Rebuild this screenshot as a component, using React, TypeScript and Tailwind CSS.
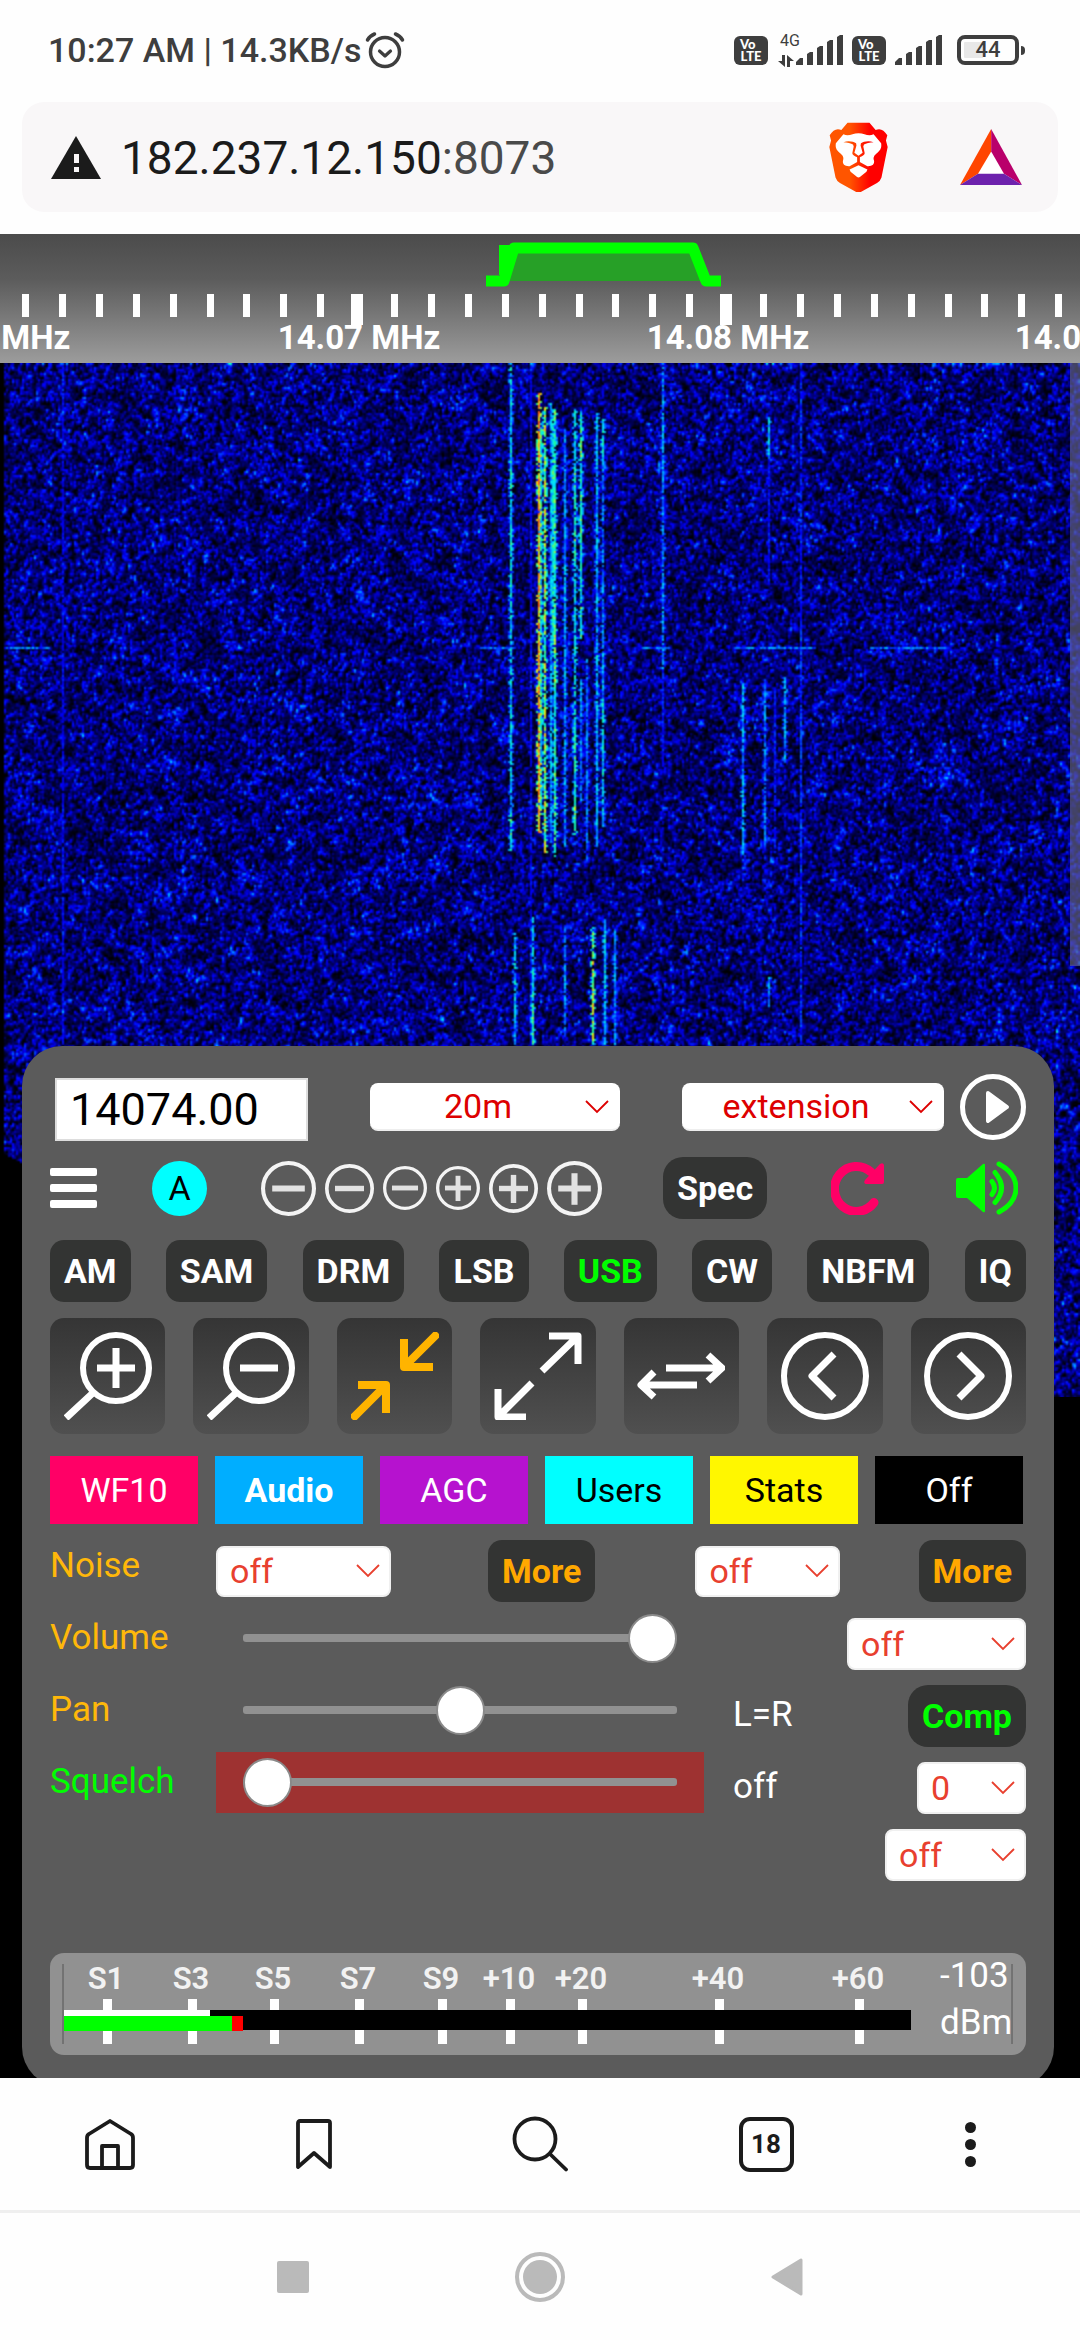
import { useLayoutEffect, useRef } from "react";
import type { ReactNode } from "react";

/* ---------- waterfall ---------- */

type Trace = { x: number; from: number; to: number; level: number };

const FIELD_WIDTH = 1080;
const FIELD_HEIGHT = 1034;
const CELL = 2;

const TRACES: Trace[] = [
  { x: 62, from: 0, to: 683, level: 0.34 },
  { x: 511, from: 0, to: 488, level: 0.58 },
  { x: 531, from: 0, to: 683, level: 0.34 },
  { x: 539, from: 31, to: 470, level: 0.95 },
  { x: 541, from: 60, to: 450, level: 0.6 },
  { x: 545, from: 45, to: 490, level: 0.78 },
  { x: 551, from: 40, to: 480, level: 0.52 },
  { x: 553, from: 50, to: 280, level: 0.62 },
  { x: 555, from: 47, to: 494, level: 0.68 },
  { x: 565, from: 67, to: 485, level: 0.5 },
  { x: 575, from: 47, to: 472, level: 0.62 },
  { x: 581, from: 49, to: 277, level: 0.62 },
  { x: 581, from: 316, to: 440, level: 0.48 },
  { x: 587, from: 297, to: 500, level: 0.46 },
  { x: 597, from: 50, to: 485, level: 0.52 },
  { x: 603, from: 57, to: 97, level: 0.6 },
  { x: 603, from: 97, to: 337, level: 0.48 },
  { x: 603, from: 337, to: 465, level: 0.6 },
  { x: 663, from: 0, to: 307, level: 0.48 },
  { x: 663, from: 307, to: 405, level: 0.36 },
  { x: 769, from: 55, to: 97, level: 0.54 },
  { x: 769, from: 97, to: 220, level: 0.36 },
  { x: 800, from: 0, to: 683, level: 0.38 },
  { x: 742, from: 318, to: 494, level: 0.54 },
  { x: 765, from: 316, to: 487, level: 0.46 },
  { x: 775, from: 327, to: 490, level: 0.36 },
  { x: 785, from: 314, to: 400, level: 0.52 },
  { x: 515, from: 570, to: 683, level: 0.56 },
  { x: 532, from: 555, to: 683, level: 0.62 },
  { x: 565, from: 567, to: 675, level: 0.48 },
  { x: 593, from: 564, to: 683, level: 0.76 },
  { x: 605, from: 556, to: 683, level: 0.54 },
  { x: 614, from: 567, to: 683, level: 0.48 },
  { x: 769, from: 615, to: 645, level: 0.5 },
];

const BURST_Y = 285;
const BURSTS: [number, number][] = [
  [4, 50],
  [480, 515],
  [640, 670],
  [735, 815],
  [870, 945],
];

const STOPS: [number, number, number, number][] = [
  [0, 0, 0, 0],
  [0.34, 0, 0, 255],
  [0.45, 0, 120, 255],
  [0.56, 0, 225, 255],
  [0.68, 30, 255, 150],
  [0.8, 225, 240, 20],
  [0.92, 255, 170, 20],
  [1, 255, 90, 20],
];

function colour(level: number): [number, number, number] {
  const v = Math.min(1, Math.max(0, level));
  for (let i = 1; i < STOPS.length; i++) {
    const hi = STOPS[i];
    if (v <= hi[0]) {
      const lo = STOPS[i - 1];
      const t = (v - lo[0]) / (hi[0] - lo[0]);
      return [lo[1] + (hi[1] - lo[1]) * t, lo[2] + (hi[2] - lo[2]) * t, lo[3] + (hi[3] - lo[3]) * t];
    }
  }
  return [255, 90, 20];
}

function makeRandom(seed: number) {
  let s = seed;
  return () => {
    s = (s + 0x6d2b79f5) | 0;
    let t = Math.imul(s ^ (s >>> 15), 1 | s);
    t = (t + Math.imul(t ^ (t >>> 7), 61 | t)) ^ t;
    return ((t ^ (t >>> 14)) >>> 0) / 4294967296;
  };
}

function Waterfall() {
  const ref = useRef<HTMLCanvasElement>(null);

  useLayoutEffect(() => {
    const canvas = ref.current;
    const ctx = canvas?.getContext("2d");
    if (!ctx) return;
    const cols = FIELD_WIDTH / CELL;
    const rows = FIELD_HEIGHT / CELL;
    const random = makeRandom(14074);
    const field = new Float32Array(cols * rows);
    for (let i = 0; i < field.length; i++) {
      field[i] = -Math.log(1 - random() * 0.99);
    }
    /* coarse grid that makes patches of the noise floor lighter or darker */
    const patchCols = Math.ceil(cols / 6) + 2;
    const patchRows = Math.ceil(rows / 6) + 2;
    const patches = Array.from({ length: patchCols * patchRows }, () => random());
    const patchAt = (x: number, y: number) => {
      const px = x / 6;
      const py = y / 6;
      const ix = Math.floor(px);
      const iy = Math.floor(py);
      const fx = px - ix;
      const fy = py - iy;
      const k = iy * patchCols + ix;
      const top = patches[k] * (1 - fx) + patches[k + 1] * fx;
      const low = patches[k + patchCols] * (1 - fx) + patches[k + patchCols + 1] * fx;
      return top * (1 - fy) + low * fy;
    };
    const smooth = new Float32Array(cols * rows);
    for (let y = 0; y < rows; y++) {
      for (let x = 0; x < cols; x++) {
        const i = y * cols + x;
        const up = y > 0 ? field[i - cols] : field[i];
        const left = x > 0 ? field[i - 1] : field[i];
        const diag = y > 0 && x > 0 ? field[i - cols - 1] : field[i];
        const sum = field[i] * 0.66 + up * 0.4 + left * 0.26 + diag * 0.1;
        const v = (sum * 0.155 - 0.04) * (0.6 + patchAt(x, y) * 0.8);
        smooth[i] = v > 0.32 ? 0.32 + (v - 0.32) * 0.42 : v;
      }
    }
    for (const t of TRACES) {
      const x = Math.floor(t.x / CELL);
      let drift = 1;
      for (let y = Math.floor(t.from / CELL); y < Math.floor(t.to / CELL); y++) {
        drift = drift * 0.85 + (0.7 + random() * 0.6) * 0.15;
        const level = t.level * drift * (0.78 + random() * 0.36);
        const i = y * cols + x;
        if (random() > 0.08) smooth[i] = Math.max(smooth[i], level);
        if (t.level > 0.45 && random() > 0.4) {
          const side = i + (random() > 0.5 ? 1 : -1);
          smooth[side] = Math.max(smooth[side], level * 0.78);
        }
      }
    }
    const burstRow = Math.floor(BURST_Y / CELL);
    for (const [from, to] of BURSTS) {
      for (let x = Math.floor(from / CELL); x < to / CELL; x++) {
        const i = burstRow * cols + x;
        smooth[i] = Math.max(smooth[i], 0.32 + random() * 0.22);
      }
    }
    const image = ctx.createImageData(cols, rows);
    for (let y = 0; y < rows; y++) {
      for (let x = 0; x < cols; x++) {
        const i = y * cols + x;
        const blank = x < 2 || (x < 14 && y * CELL > 788 + x);
        const [r, g, b] = blank ? [0, 0, 0] : colour(smooth[i]);
        image.data[i * 4] = r;
        image.data[i * 4 + 1] = g;
        image.data[i * 4 + 2] = b;
        image.data[i * 4 + 3] = 255;
      }
    }
    ctx.putImageData(image, 0, 0);
  }, []);

  return (
    <canvas
      ref={ref}
      width={FIELD_WIDTH / CELL}
      height={FIELD_HEIGHT / CELL}
      role="img"
      aria-label="Waterfall"
      className="absolute inset-x-0 top-0 h-[1034px] w-full"
    />
  );
}

/* ---------- status bar ---------- */

function Volte() {
  return (
    <div className="flex h-[29px] w-[34px] flex-col items-center justify-center rounded-md bg-[#3e3e3e] font-[Lato,sans-serif] text-[13px] leading-[12px] font-black text-white">
      <span className="self-start pl-[6px]">Vo</span>
      <span>LTE</span>
    </div>
  );
}

function SignalBars() {
  return (
    <svg viewBox="0 0 48 30" className="h-[30px] w-[48px]" fill="#3e3e3e" aria-hidden="true">
      <path d="M0 30v-3l4-4h3v7zM11 30V19l3-2h3v13zM21 30V13l3-2h3v19zM31 30V7l3-2h3v25zM41 30V2l3-2h3v30z" />
    </svg>
  );
}

function StatusBar() {
  return (
    <header className="flex h-[100px] items-center justify-between pr-[55px] pl-[48px] text-[#3e3e3e]">
      <div className="flex items-center gap-1">
        <span className="text-[34px] leading-[40px] font-medium">10:27 AM | 14.3KB/s</span>
        <svg viewBox="0 0 40 38" className="h-[38px] w-[40px]" fill="none" stroke="#3e3e3e" aria-hidden="true">
          <circle cx="20" cy="21" r="14.5" strokeWidth="3.5" />
          <path d="M14.5 20l5.5 5 5.5-5" strokeWidth="3.2" strokeLinecap="round" strokeLinejoin="round" />
          <path d="M2.5 9a14 14 0 0 1 7-6M37.5 9a14 14 0 0 0-7-6" strokeWidth="3.5" strokeLinecap="round" />
        </svg>
      </div>
      <div className="flex items-center">
        <Volte />
        <div className="ml-2 flex h-[34px] w-[28px] flex-col items-center justify-between">
          <span className="text-[16px] leading-[16px]">4G</span>
          <svg viewBox="0 0 16 12" className="mr-2 h-3 w-4" fill="#3e3e3e" aria-hidden="true">
            <path d="M4 0h3v12L0 6h4zM9 12V0l7 6h-4v6z" />
          </svg>
        </div>
        <div className="-ml-2"><SignalBars /></div>
        <div className="ml-[8px]"><Volte /></div>
        <div className="ml-[9px]"><SignalBars /></div>
        <div className="ml-[14px] flex items-center gap-[2px]">
          <div className="flex h-[30px] w-[62px] items-center justify-center rounded-[8px] border-4 border-[#3e3e3e] bg-linear-to-r from-[#e8e8e8] from-40% to-[#fefefe] to-40% bg-clip-content p-[3px] text-[22px] leading-[22px] font-medium">
            44
          </div>
          <div className="h-[9px] w-1 rounded-r-sm bg-[#3e3e3e]" />
        </div>
      </div>
    </header>
  );
}

/* ---------- address bar ---------- */

function BraveLion() {
  return (
    <svg viewBox="0 0 172 212" preserveAspectRatio="none" className="h-[70px] w-[59px]" aria-hidden="true">
      <defs>
        <linearGradient id="lion" gradientUnits="userSpaceOnUse" x1="0" y1="0" x2="172" y2="0">
          <stop offset="0.35" stopColor="#ff5500" />
          <stop offset="0.7" stopColor="#ff0000" />
        </linearGradient>
      </defs>
      <path
        fill="url(#lion)"
        d="M54 2h64l18 22c14-6 24 0 34 16l-4 16 5 20-18 92q-3 10-13 17l-46 26q-8 4-16 0l-46-26q-10-7-13-17L1 76l5-20-4-16c10-16 20-22 34-16z"
      />
      <path
        fill="#fff"
        d="M42 37c16 8 26-3 44-3s28 11 44 3l22 27c2 14-2 20-10 28-10 8-14 14-11 24 3 12-6 19-19 18l-17-10q-9-5-9-5t-9 5l-17 10c-13 1-22-6-19-18 3-10-1-16-11-24-8-8-12-14-10-28z"
      />
      <path fill="#fff" d="M86 131l26 13-3 7-18 15q-5 4-10 0l-18-15-3-7z" />
      <path
        fill="url(#lion)"
        d="M42 61c16-6 30-1 37 3l1 7-6 22 12 9 12-9-6-22 1-7c7-4 21-9 37-3-12 0-22 3-28 7l-2 6 4 20c0 7-8 9-14 13v14h-8v-14c-6-4-14-6-14-13l4-20-2-6c-6-4-16-7-28-7z"
      />
    </svg>
  );
}

function AddressBar() {
  return (
    <div className="pt-[2px] pr-[22px] pb-[22px] pl-[22px]">
      <div className="flex h-[110px] items-center rounded-[22px] bg-[#f9f7f8] pr-[36px] pl-[29px]">
        <svg viewBox="0 0 50 43" className="h-[43px] w-[50px]" aria-hidden="true">
          <path d="M25 0l25 43H0z" fill="#1b1b1b" />
          <path d="M23 18h5v9h-5zM23 31h5v5h-5z" fill="#f9f7f8" />
        </svg>
        <div className="ml-[20px] flex-1 pt-[2px] text-[46px] leading-[54px] text-[#1b1b1b]">
          182.237.12.150<span className="text-[#4a4a4a]">:8073</span>
        </div>
        <button type="button" aria-label="Brave Shields" className="mr-[72px]"><BraveLion /></button>
        <button type="button" aria-label="Brave Rewards">
          <svg viewBox="0 0 179 166" preserveAspectRatio="none" className="h-[56px] w-[62px]" aria-hidden="true">
            <path d="M90 60l45 76H45z" fill="#fff" />
            <path d="M90 0v67l-38 66-52 33z" fill="#ff4500" />
            <path d="M90 0v67l37 66 52 33z" fill="#b9006b" />
            <path d="M0 166l52-33h75l52 33z" fill="#6d22ad" />
          </svg>
        </button>
      </div>
    </div>
  );
}

/* ---------- frequency scale ---------- */

const TICKS = Array.from({ length: 29 }, (_, i) => Math.round(25 + i * 36.9));

function FrequencyScale() {
  return (
    <svg viewBox="0 0 1080 129" className="relative block w-full" role="img" aria-label="Frequency scale">
      <defs>
        <linearGradient id="scale" x1="0" y1="0" x2="0" y2="1">
          <stop offset="0" stopColor="#4b4b4b" />
          <stop offset="0.35" stopColor="#5c5c5c" />
          <stop offset="1" stopColor="#9c9c9c" />
        </linearGradient>
      </defs>
      <rect width="1080" height="129" fill="url(#scale)" />
      <path d="M503 47l10-34h180l13 34z" fill="#27a027" />
      <path d="M486 47h18l10-33h179l13 33h15" fill="none" stroke="#00ff00" strokeWidth="11" strokeLinejoin="round" />
      <path d="M499 11h12v30h-12z" fill="#00ff00" />
      {TICKS.map((x, i) => {
        const major = i === 9 || i === 19;
        return (
          <rect key={x} x={major ? x - 6 : x - 3} y="60" width={major ? 12 : 7} height={major ? 31 : 23} fill="#fff" />
        );
      })}
      <g fill="#fff" fontSize="33" fontWeight="700" textAnchor="middle">
        <text x="-11" y="115">14.06 MHz</text>
        <text x="359" y="115">14.07 MHz</text>
        <text x="728" y="115">14.08 MHz</text>
        <text x="1096" y="115">14.09 MHz</text>
      </g>
    </svg>
  );
}

/* ---------- controls ---------- */

function Select({ label, value, className, centred = false }: { label: string; value: string; className: string; centred?: boolean }) {
  return (
    <div className={`relative shrink-0 ${className}`}>
      <select
        aria-label={label}
        defaultValue={value}
        className={
          centred
            ? "size-full appearance-none rounded-[8px] border-b-2 border-[#eeeeee] bg-white pr-[34px] text-center text-[34px] leading-[40px] text-[#dd0000]"
            : "size-full appearance-none rounded-[8px] border-2 border-[#f0f0f0] bg-white pl-[12px] text-[34px] leading-[40px] text-[#e8402f]"
        }
      >
        <option>{value}</option>
      </select>
      <svg viewBox="0 0 24 14" className="pointer-events-none absolute top-1/2 right-[11px] h-[14px] w-[24px] -translate-y-1/2" fill="none" stroke={centred ? "#dd0000" : "#e8402f"} strokeWidth="1.8" aria-hidden="true">
        <path d="M1 1l11 11L23 1" />
      </svg>
    </div>
  );
}

function TextButton({ children, className }: { children: ReactNode; className: string }) {
  return (
    <button type="button" className={`h-[62px] shrink-0 bg-[#333433] px-[14px] text-[34px] leading-[60px] font-bold ${className}`}>
      {children}
    </button>
  );
}

function RoundButton({ plus, size }: { plus: boolean; size: string }) {
  return (
    <button type="button" aria-label={plus ? "Zoom in step" : "Zoom out step"} className={size}>
      <svg viewBox="0 0 54 54" className="size-full" fill="none" stroke="#f4f4f4" strokeWidth="4" aria-hidden="true">
        <circle cx="27" cy="27" r="25" />
        <path d="M11 27h32" strokeWidth="6" stroke="#e2e2e2" />
        {plus && <path d="M27 12v31" strokeWidth="6" stroke="#e2e2e2" />}
      </svg>
    </button>
  );
}

function ToolButton({ label, children, amber = false }: { label: string; children: ReactNode; amber?: boolean }) {
  return (
    <button type="button" aria-label={label} className="flex h-[116px] items-center justify-center rounded-[14px] bg-linear-to-b from-[#353535] to-[#505050]">
      <svg viewBox="0 0 88 88" className="size-[88px]" fill="none" stroke={amber ? "#ffb400" : "#fff"} strokeWidth={amber ? 8 : 7} strokeLinejoin="round" aria-hidden="true">
        {children}
      </svg>
    </button>
  );
}

function Slider({ id, value, alert = false }: { id: string; value: number; alert?: boolean }) {
  return (
    <div className={alert ? "flex h-[61px] flex-1 items-center bg-[#9e3231] px-[27px]" : "flex h-[61px] flex-1 items-center px-[27px]"}>
      <input
        id={id}
        type="range"
        min={0}
        max={100}
        defaultValue={value}
        className="h-[8px] w-full appearance-none rounded-[3px] bg-[#919191] [&::-webkit-slider-thumb]:size-[49px] [&::-webkit-slider-thumb]:appearance-none [&::-webkit-slider-thumb]:rounded-full [&::-webkit-slider-thumb]:border-2 [&::-webkit-slider-thumb]:border-[#8a8a8a] [&::-webkit-slider-thumb]:bg-white"
      />
    </div>
  );
}

const MODES = ["AM", "SAM", "DRM", "LSB", "USB", "CW", "NBFM", "IQ"];

const TABS = [
  { name: "WF10", style: "bg-[#ff0066] text-white" },
  { name: "Audio", style: "bg-[#00aeff] text-white font-bold" },
  { name: "AGC", style: "bg-[#b612cf] text-white" },
  { name: "Users", style: "bg-[#00ffff] text-black" },
  { name: "Stats", style: "bg-[#fff700] text-black" },
  { name: "Off", style: "bg-black text-white" },
];

const METER_MARKS = [
  { x: 57, text: "S1" },
  { x: 142, text: "S3" },
  { x: 224, text: "S5" },
  { x: 309, text: "S7" },
  { x: 392, text: "S9" },
  { x: 460, text: "+10" },
  { x: 532, text: "+20" },
  { x: 669, text: "+40" },
  { x: 809, text: "+60" },
];

function SignalMeter() {
  return (
    <svg viewBox="0 0 976 102" className="mt-[72px] block w-full rounded-[14px] bg-[#919191]" role="img" aria-label="Signal meter">
      <path d="M13 11v80M962 11v80" stroke="#555" strokeWidth="1" />
      <g fill="#fff">
        {METER_MARKS.map((m) => (
          <rect key={m.text} x={m.x - 4} y="46" width="9" height="45" />
        ))}
      </g>
      <g fill="#f2f2f2" fontSize="31" fontWeight="600" textAnchor="middle">
        {METER_MARKS.map((m) => (
          <text key={m.text} x={m.x - 1} y="36">{m.text}</text>
        ))}
      </g>
      <rect x="14" y="57" width="847" height="20" fill="#000" />
      <rect x="14" y="57" width="146" height="6" fill="#fff" />
      <rect x="14" y="63" width="168" height="15" fill="#00ff00" />
      <rect x="182" y="63" width="11" height="15" fill="#ff0000" />
      <g fill="#fff" fontSize="35">
        <text x="890" y="34">-103</text>
        <text x="890" y="81">dBm</text>
      </g>
    </svg>
  );
}

function ControlPanel() {
  return (
    <section className="relative mt-[683px] mr-[26px] -mb-[9px] ml-[22px] rounded-[40px] bg-[#5b5b5b] px-[28px] pt-[28px] pb-[32px]">
      <div className="flex h-[66px] items-center">
        <label htmlFor="frequency" className="sr-only">Frequency</label>
        <input
          id="frequency"
          type="text"
          defaultValue="14074.00"
          className="mt-1 ml-[5px] h-[63px] w-[253px] border-2 border-[#dddddd] bg-white pl-[13px] text-[45px] leading-[56px] text-black"
        />
        <Select label="Band" value="20m" centred className="ml-[62px] h-[48px] w-[250px]" />
        <Select label="Extension" value="extension" centred className="ml-[62px] h-[48px] w-[262px]" />
        <button type="button" aria-label="Play" className="ml-auto size-[66px]">
          <svg viewBox="0 0 66 66" className="size-full" aria-hidden="true">
            <circle cx="33" cy="33" r="30.5" fill="none" stroke="#fff" strokeWidth="5" />
            <path d="M28 19l19 14-19 14z" fill="#fff" stroke="#fff" strokeWidth="4" strokeLinejoin="round" />
          </svg>
        </button>
      </div>

      <div className="mt-[17px] flex h-[62px] items-center">
        <button type="button" aria-label="Menu" className="flex w-[47px] flex-col gap-[8px]">
          <span className="h-[8px] rounded-xs bg-white" />
          <span className="h-[8px] rounded-xs bg-white" />
          <span className="h-[8px] rounded-xs bg-white" />
        </button>
        <button type="button" className="ml-[55px] size-[55px] rounded-full bg-[#00ffff] text-[34px] leading-[50px] text-black">A</button>
        <div className="ml-[54px] flex items-center gap-[9px]">
          <RoundButton plus={false} size="size-[55px]" />
          <RoundButton plus={false} size="size-[49px]" />
          <RoundButton plus={false} size="size-[44px]" />
          <RoundButton plus size="size-[44px]" />
          <RoundButton plus size="size-[49px]" />
          <RoundButton plus size="size-[55px]" />
        </div>
        <TextButton className="ml-[61px] rounded-[20px] text-white">Spec</TextButton>
        <button type="button" aria-label="Reload" className="ml-[64px]">
          <svg viewBox="0 0 54 54" className="size-[54px]" aria-hidden="true">
            <path d="M43 41.5A22 22.5 0 1 1 40 11" fill="none" stroke="#ff0066" strokeWidth="9" strokeLinecap="round" />
            <path d="M53 4v17q0 2-2 2H35q-3-1-1-4L49 3q3-2 4 1z" fill="#ff0066" />
          </svg>
        </button>
        <button type="button" aria-label="Mute" className="mr-[8px] ml-auto">
          <svg viewBox="0 0 62 54" className="h-[54px] w-[62px]" aria-hidden="true">
            <path d="M2 17h9L27 3q2-1 2 1v46q0 2-2 1L11 37H2q-2 0-2-2V19q0-2 2-2z" fill="#00ff00" />
            <path d="M36 20.5q5 6.5 0 13M39 11.5q13 15.5 0 30M43 3q17 9 17 24T43 51" fill="none" stroke="#00ff00" strokeWidth="5" strokeLinecap="round" />
          </svg>
        </button>
      </div>

      <div className="mt-[21px] flex justify-between">
        {MODES.map((mode) => (
          <TextButton key={mode} className={mode === "USB" ? "rounded-[14px] text-[#00ff00]" : "rounded-[14px] text-white"}>
            {mode}
          </TextButton>
        ))}
      </div>

      <div className="mt-[16px] grid grid-cols-7 gap-[28px]">
        <ToolButton label="Zoom in">
          <circle cx="52" cy="36" r="33" strokeWidth="6" />
          <path d="M52 16v40M33 36h38M31 59L2 86" />
        </ToolButton>
        <ToolButton label="Zoom out">
          <circle cx="52" cy="36" r="33" strokeWidth="6" />
          <path d="M33 36h38M31 59L2 86" />
        </ToolButton>
        <ToolButton label="Minimum zoom" amber>
          <path d="M87 1L52 36M53 7v28h29M1 87l35-35M35 81V53H7" />
        </ToolButton>
        <ToolButton label="Maximum zoom">
          <path d="M48 39L84 4M55 4h29v28M38 51L4 85M4 57v28h28" />
        </ToolButton>
        <ToolButton label="Swap">
          <path d="M29 36h56M71 23l14 13-14 13M60 53H4M17 40L4 53l13 12" />
        </ToolButton>
        <ToolButton label="Previous">
          <circle cx="44" cy="44" r="41" strokeWidth="6" />
          <path d="M53 22L31 44l22 22" />
        </ToolButton>
        <ToolButton label="Next">
          <circle cx="44" cy="44" r="41" strokeWidth="6" />
          <path d="M35 22l22 22-22 22" />
        </ToolButton>
      </div>

      <div className="mt-[22px] mr-[3px] grid grid-cols-6 gap-[17px]">
        {TABS.map((tab) => (
          <button key={tab.name} type="button" className={`h-[68px] text-[34px] leading-[64px] ${tab.style}`}>
            {tab.name}
          </button>
        ))}
      </div>

      <div className="mt-[16px] flex h-[62px] items-center">
        <span className="w-[166px] self-start text-[35px] leading-[52px] text-[#ffb80a]">Noise</span>
        <Select label="Noise blanker" value="off" className="h-[51px] w-[175px]" />
        <TextButton className="ml-[97px] rounded-[14px] text-[#ffa800]">More</TextButton>
        <Select label="Noise filter" value="off" className="ml-[100px] h-[51px] w-[145px]" />
        <TextButton className="ml-auto rounded-[14px] text-[#ffa800]">More</TextButton>
      </div>

      <div className="flex">
        <div className="flex-1 text-[35px] leading-[40px]">
          <div className="flex h-[72px] items-center">
            <label htmlFor="volume" className="w-[166px] text-[#ffb80a]">Volume</label>
            <Slider id="volume" value={100} />
            <span className="ml-[29px] w-[114px]" />
          </div>
          <div className="flex h-[72px] items-center">
            <label htmlFor="pan" className="w-[166px] text-[#ffb80a]">Pan</label>
            <Slider id="pan" value={50} />
            <output className="ml-[29px] w-[114px] pt-[10px] text-white">L=R</output>
          </div>
          <div className="flex h-[72px] items-center">
            <label htmlFor="squelch" className="w-[166px] text-[#00ff00]">Squelch</label>
            <Slider id="squelch" value={0} alert />
            <output className="ml-[29px] w-[114px] pt-[10px] text-white">off</output>
          </div>
        </div>
        <div className="flex w-[179px] flex-col items-end gap-[15px] pt-[16px]">
          <Select label="De-emphasis" value="off" className="h-[52px] w-[179px]" />
          <TextButton className="rounded-[20px] text-[#00ff00]">Comp</TextButton>
          <Select label="Squelch tail" value="0" className="h-[52px] w-[109px]" />
          <Select label="Squelch mode" value="off" className="h-[52px] w-[141px]" />
        </div>
      </div>

      <SignalMeter />
    </section>
  );
}

/* ---------- browser and system navigation ---------- */

function BrowserBar() {
  return (
    <nav aria-label="Browser" className="relative grid h-[132px] grid-cols-[220fr_188fr_264fr_188fr_220fr] place-items-center bg-[#fefefe] text-[#1b1b1b]">
      <button type="button" aria-label="Home">
        <svg viewBox="0 0 50 52" className="h-[52px] w-[50px]" fill="none" stroke="currentColor" strokeWidth="3.8" strokeLinejoin="round" aria-hidden="true">
          <path d="M25 3L4 16q-2 1-2 4v27q0 3 3 3h40q3 0 3-3V20q0-3-2-4zM17 50V28h16v22" />
        </svg>
      </button>
      <button type="button" aria-label="Bookmarks">
        <svg viewBox="0 0 36 50" className="h-[50px] w-[36px]" fill="none" stroke="currentColor" strokeWidth="3.8" strokeLinejoin="round" aria-hidden="true">
          <path d="M2 4q0-2 2-2h28q2 0 2 2v44L18 34 2 48z" />
        </svg>
      </button>
      <button type="button" aria-label="Search">
        <svg viewBox="0 0 56 56" className="size-[56px]" fill="none" stroke="currentColor" strokeWidth="3.8" strokeLinecap="round" aria-hidden="true">
          <circle cx="23" cy="23" r="20.5" />
          <path d="M38 38l16 15.5" />
        </svg>
      </button>
      <button type="button" aria-label="18 open tabs" className="flex h-[55px] w-[55px] items-center justify-center rounded-[11px] border-4 border-[#1b1b1b] text-[26px] leading-[28px] font-bold">
        18
      </button>
      <button type="button" aria-label="More options" className="flex flex-col gap-[6px]">
        <span className="size-[11px] rounded-full bg-[#1b1b1b]" />
        <span className="size-[11px] rounded-full bg-[#1b1b1b]" />
        <span className="size-[11px] rounded-full bg-[#1b1b1b]" />
      </button>
    </nav>
  );
}

function SystemBar() {
  return (
    <nav aria-label="System" className="flex h-[130px] items-center justify-center gap-[197px] border-t-3 border-[#efefef] bg-[#fefefe]">
      <button type="button" aria-label="Recent apps" className="flex w-[50px] justify-center">
        <span className="size-[32px] rounded-xs bg-[#bababa]" />
      </button>
      <button type="button" aria-label="Home screen" className="flex size-[50px] items-center justify-center rounded-full border-4 border-[#bababa]">
        <span className="size-[34px] rounded-full bg-[#bababa]" />
      </button>
      <button type="button" aria-label="Back" className="flex w-[50px] justify-center">
        <svg viewBox="0 0 32 38" className="h-[38px] w-[32px]" fill="#bababa" stroke="#bababa" strokeWidth="3" strokeLinejoin="round" aria-hidden="true">
          <path d="M2 19L30 2v34z" />
        </svg>
      </button>
    </nav>
  );
}

export default function App() {
  return (
    <div className="min-h-screen bg-[#fefefe] font-[Roboto,sans-serif]">
      <StatusBar />
      <AddressBar />
      <main className="overflow-hidden bg-black">
        <FrequencyScale />
        <div className="relative flow-root">
          <Waterfall />
          <div className="absolute top-0 right-0 h-[603px] w-[10px] bg-[#6e6e8c]/60" />
          <ControlPanel />
        </div>
      </main>
      <BrowserBar />
      <SystemBar />
    </div>
  );
}
